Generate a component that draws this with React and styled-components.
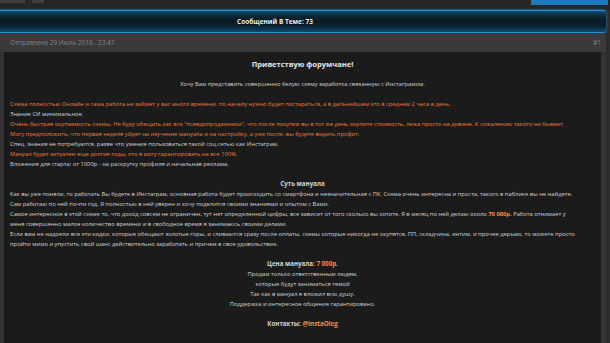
import React from "react";
import styled, { createGlobalStyle } from "styled-components";

const Global = createGlobalStyle`
  html, body { margin: 0; padding: 0; background: #2c2c2c; }
  body { width: 610px; height: 343px; overflow: hidden; font-family: "Open Sans", "Liberation Sans", sans-serif; }
`;

const Page = styled.div`
  width: 610px;
  height: 343px;
  background: #2c2c2c;
  display: flex;
  flex-direction: column;
  overflow: hidden;
`;

const TopBar = styled.div`
  height: 10px;
  display: flex;
  align-items: flex-start;
  gap: 7px;
  padding-right: 2px;
  background: #262626;
`;

const Tab = styled.div`
  width: ${(p) => p.w}px;
  height: 3px;
  background: #3e3e3e;
`;

const BlueTab = styled.div`
  margin-left: auto;
  width: 77px;
  height: 5px;
  background: #1c7cc0;
`;

const Banner = styled.div`
  width: 606px;
  height: 23px;
  box-sizing: border-box;
  display: flex;
  align-items: center;
  justify-content: center;
  padding-right: 56px;
  border-top: 1px solid #1e95e0;
  border-bottom: 1px solid #1e95e0;
  border-radius: 0 3px 3px 0;
  background: linear-gradient(
    to bottom,
    #0f4a70 0%,
    #0c2634 25%,
    #0b1a22 50%,
    #0c2634 75%,
    #0f4a70 100%
  );
  box-shadow: 0 0 3px #1a8ad0;
  color: #f2f2f2;
  font-size: 6.5px;
  font-weight: 700;
  text-shadow: 0 0 2px #000;
`;

const Post = styled.div`
  width: 606px;
  flex: 1;
  display: flex;
  flex-direction: column;
  background: #333333;
`;

const PostHead = styled.div`
  height: 19px;
  display: flex;
  align-items: center;
  justify-content: space-between;
  padding: 0 5px 0 10px;
  background: #3a3a3a;
  color: #858585;
  font-size: 6.4px;
`;

const Body = styled.div`
  flex: 1;
  margin: 0 5px 0 4px;
  background: #1b1b1b;
  padding: 7px 6px 0 6px;
  color: #d2d2d2;
  line-height: 10px;
  white-space: nowrap;
`;

const Line = styled.div`
  text-align: ${(p) => (p.center ? "center" : "left")};
  color: ${(p) => (p.orange ? "#ec7b3e" : "#d4d4d4")};
  font-weight: ${(p) => (p.bold ? 700 : 400)};
  font-size: ${(p) => (p.bold ? "6.2px" : "5.8px")};
  height: 10px;
`;

const Title = styled(Line)`
  color: #e6e6e6;
  font-weight: 700;
  font-size: 7.5px;
`;

const Accent = styled.span`
  color: #ff8a45;
  font-weight: 700;
`;

export default function App() {
  return (
    <Page>
      <Global />
      <TopBar>
        <Tab w={25} />
        <Tab w={12} />
        <BlueTab />
      </TopBar>
      <Banner>Сообщений В Теме: 73</Banner>
      <Post>
        <PostHead>
          <span>Отправлено 29 Июль 2018 - 23:47</span>
          <span>#1</span>
        </PostHead>
        <Body>
          <Title center>Приветствую форумчане!</Title>
          <Line />
          <Line center>Хочу Вам представить совершенно белую схему заработка связанную с Инстаграмом.</Line>
          <Line />
          <Line orange>Схема полностью Онлайн и сама работа не займет у вас много времени, по началу нужно будет постараться, а в дальнейшем это в среднем 2 часа в день.</Line>
          <Line>Знание СИ минимальное.</Line>
          <Line orange>Очень быстрая окупаемость схемы. Не буду обещать как все "псевдопродажники", что после покупки вы в тот же день окупите стоимость, лежа просто на диване. К сожалению такого не бывает.</Line>
          <Line orange>Могу предположить, что первая неделя уйдет на изучение мануала и на настройку, а уже после, вы будете видеть профит.</Line>
          <Line>Спец. знания не потребуются, разве что умение пользоваться такой соц.сетью как Инстаграм.</Line>
          <Line orange>Мануал будет актуален еще долгие годы, это я могу гарантировать на все 100%.</Line>
          <Line>Вложения для старта: от 1000р - на раскрутку профиля и начальная реклама.</Line>
          <Line />
          <Line center bold>Суть мануала</Line>
          <Line>Как вы уже поняли, то работать Вы будете в Инстаграм, основная работа будет происходить со смартфона и незначительная с ПК. Схема очень интересна и проста, такого в паблике вы не найдете.</Line>
          <Line>Сам работаю по ней почти год. Я полностью в ней уверен и хочу поделится своими знаниями и опытом с Вами.</Line>
          <Line>Самое интересное в этой схеме то, что доход совсем не ограничен, тут нет определенной цифры, все зависит от того сколько вы хотите. Я в месяц по ней делаю около <Accent>70 000р.</Accent> Работа отнимает у</Line>
          <Line>меня совершенно малое количество времени и в свободное время я занимаюсь своими делами.</Line>
          <Line>Если вам не надоели все эти кидки, которые обещают золотые горы, и сливаются сразу после оплаты, схемы которые никогда не окупятся, ПП, складчина, интим, и прочее дерьмо, то можете просто</Line>
          <Line>пройти мимо и упустить свой шанс действительно заработать и причем в свое удовольствие.</Line>
          <Line />
          <Line center bold>Цена мануала: <Accent>7 000р.</Accent></Line>
          <Line center>Продам только ответственным людям,</Line>
          <Line center>которые будут заниматься темой</Line>
          <Line center>Так как в мануал я вложил всю душу.</Line>
          <Line center>Поддержка и интересное общение гарантировано.</Line>
          <Line />
          <Line center bold>Контакты: <Accent>@InstaOleg</Accent></Line>
        </Body>
      </Post>
    </Page>
  );
}
